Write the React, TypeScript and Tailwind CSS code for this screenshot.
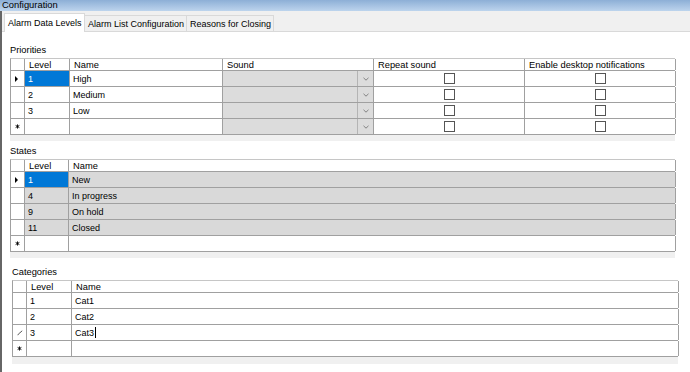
import React from "react";

const Arrow = () => (
  <span className="block w-0 h-0 border-y-[3px] border-y-transparent border-l-[3px] border-l-black" />
);

const Star = () => (
  <svg width="5" height="5" viewBox="0 0 5 5">
    <path d="M2.5 0.4v4.2M0.6 1.4l3.8 2.2M0.6 3.6l3.8-2.2" stroke="#000" strokeWidth="0.9" />
  </svg>
);

const Pencil = () => (
  <svg width="6" height="6" viewBox="0 0 6 6">
    <path d="M0.8 5.2 L1.3 4.2 L5.2 0.8" stroke="#444" strokeWidth="0.9" fill="none" />
  </svg>
);

function RowHead({ kind }: { kind?: "arrow" | "star" | "pencil" }) {
  return (
    <div className="w-[14px] shrink-0 h-full border-r border-[#a0a0a0] bg-white flex items-center pl-[4px]">
      {kind === "arrow" && <Arrow />}
      {kind === "star" && <Star />}
      {kind === "pencil" && <Pencil />}
    </div>
  );
}

function Check() {
  return <span className="block w-[11px] h-[11px] border border-[#555555] bg-white" />;
}

function Combo() {
  return (
    <div className="flex h-full w-full bg-[#dcdcdc]">
      <div className="flex-1" />
      <div className="w-[16px] border-l border-[#b4b4b4] flex items-center justify-center">
        <svg width="6" height="4" viewBox="0 0 6 4">
          <path d="M0.5 0.8 L3 3.2 L5.5 0.8" stroke="#777" strokeWidth="0.9" fill="none" />
        </svg>
      </div>
    </div>
  );
}

function HeadCell({ w, children }: { w: string; children?: React.ReactNode }) {
  return (
    <div
      className={`${w} shrink-0 h-full overflow-hidden pl-[4px] pt-[1px] text-[9.3px] leading-[11px] whitespace-nowrap border-r border-[#a0a0a0]`}
    >
      {children}
    </div>
  );
}

export default function App() {
  const prio = [
    { l: "1", n: "High", k: "arrow" as const, sel: true },
    { l: "2", n: "Medium" },
    { l: "3", n: "Low" },
    { l: "", n: "", k: "star" as const },
  ];
  const states = [
    { l: "1", n: "New", k: "arrow" as const, sel: true },
    { l: "4", n: "In progress" },
    { l: "9", n: "On hold" },
    { l: "11", n: "Closed" },
  ];
  const cats = [
    { l: "1", n: "Cat1" },
    { l: "2", n: "Cat2" },
    { l: "3", n: "Cat3", k: "pencil" as const, cursor: true },
    { l: "", n: "", k: "star" as const },
  ];

  return (
    <div className="w-[690px] h-[372px] overflow-hidden bg-white text-black font-['Liberation_Sans',Arial,sans-serif]">
      {/* title bar */}
      <div className="h-[11px] bg-gradient-to-b from-[#8dafd6] to-[#bdd4ed] pl-[2px] text-[9.4px] leading-[9px] overflow-hidden">
        Configuration
      </div>
      <div className="flex h-[361px]">
        <div className="w-[2px] bg-[#666666] shrink-0" />
        <div className="flex-1 flex flex-col">
          {/* tab strip */}
          <div className="h-[21px] bg-[#f0f0f0] border-b border-[#d9d9d9] flex items-end pl-[2px] text-[9px]">
            <div className="w-[81px] h-[19px] -mb-[1px] bg-white border border-b-0 border-[#d9d9d9] pl-[3px] pt-[3px] leading-[12px] whitespace-nowrap relative z-10">
              Alarm Data Levels
            </div>
            <div className="w-[102px] h-[16px] bg-[#f0f0f0] border border-b-0 border-l-0 border-[#d9d9d9] pl-[3px] pt-[2px] leading-[12px] whitespace-nowrap">
              Alarm List Configuration
            </div>
            <div className="w-[87px] h-[16px] bg-[#f0f0f0] border border-b-0 border-l-0 border-[#d9d9d9] pl-[3px] pt-[2px] leading-[12px] whitespace-nowrap">
              Reasons for Closing
            </div>
          </div>

          {/* content */}
          <div className="flex-1 bg-white pl-[8px] text-[9px]">
            {/* Priorities */}
            <div className="mt-[12px] h-[13px] leading-[13px] text-[9.3px]">Priorities</div>
            <div className="mt-[1px] w-[665px] border-t border-l border-t-[#c6c6c6] border-l-[#a0a0a0]">
              <div className="flex h-[12px] border-b border-[#a0a0a0]">
                <HeadCell w="w-[14px]" />
                <HeadCell w="w-[45px]">Level</HeadCell>
                <HeadCell w="w-[153px]">Name</HeadCell>
                <HeadCell w="w-[151px]">Sound</HeadCell>
                <HeadCell w="w-[151px]">Repeat sound</HeadCell>
                <HeadCell w="w-[151px]">Enable desktop notifications</HeadCell>
              </div>
              {prio.map((r, i) => (
                <div key={i} className="flex h-[16px] border-b border-[#a0a0a0] leading-[16px]">
                  <RowHead kind={r.k} />
                  <div
                    className={`w-[45px] shrink-0 border-r border-[#a0a0a0] pl-[3px] ${
                      r.sel ? "bg-[#0078d7] text-white" : ""
                    }`}
                  >
                    {r.l}
                  </div>
                  <div className="w-[153px] shrink-0 border-r border-[#a0a0a0] pl-[3px]">{r.n}</div>
                  <div className="w-[151px] shrink-0 border-r border-[#a0a0a0]">
                    <Combo />
                  </div>
                  <div className="w-[151px] shrink-0 border-r border-[#a0a0a0] flex items-center justify-center">
                    <Check />
                  </div>
                  <div className="w-[151px] shrink-0 border-r border-[#a0a0a0] flex items-center justify-center">
                    <Check />
                  </div>
                </div>
              ))}
            </div>
            <div className="w-[665px] h-[6px] bg-[#f0f0f0]" />

            {/* States */}
            <div className="mt-[4px] h-[13px] leading-[13px] text-[9.3px]">States</div>
            <div className="mt-[1px] w-[665px] border-t border-l border-t-[#c6c6c6] border-l-[#a0a0a0]">
              <div className="flex h-[12px] border-b border-[#a0a0a0]">
                <HeadCell w="w-[14px]" />
                <HeadCell w="w-[44px]">Level</HeadCell>
                <HeadCell w="w-[607px]">Name</HeadCell>
              </div>
              {states.map((r, i) => (
                <div key={i} className="flex h-[16px] border-b border-[#a0a0a0] leading-[16px]">
                  <RowHead kind={r.k} />
                  <div
                    className={`w-[44px] shrink-0 border-r border-[#a0a0a0] pl-[3px] ${
                      r.sel ? "bg-[#0078d7] text-white" : "bg-[#d9d9d9]"
                    }`}
                  >
                    {r.l}
                  </div>
                  <div className="w-[607px] shrink-0 border-r border-[#a0a0a0] pl-[3px] bg-[#d9d9d9]">{r.n}</div>
                </div>
              ))}
              <div className="flex h-[16px] border-b border-[#a0a0a0]">
                <RowHead kind="star" />
                <div className="w-[44px] shrink-0 border-r border-[#a0a0a0]" />
                <div className="w-[607px] shrink-0 border-r border-[#a0a0a0]" />
              </div>
            </div>
            <div className="w-[665px] h-[6px] bg-[#f0f0f0]" />

            {/* Categories */}
            <div className="ml-[2px]">
              <div className="mt-[8px] h-[13px] leading-[13px] text-[9.3px]">Categories</div>
              <div className="mt-[1px] w-[666px] border-t border-l border-t-[#c6c6c6] border-l-[#a0a0a0]">
                <div className="flex h-[12px] border-b border-[#a0a0a0]">
                  <HeadCell w="w-[14px]" />
                  <HeadCell w="w-[45px]">Level</HeadCell>
                  <HeadCell w="w-[607px]">Name</HeadCell>
                </div>
                {cats.map((r, i) => (
                  <div key={i} className="flex h-[16px] border-b border-[#a0a0a0] leading-[16px]">
                    <RowHead kind={r.k} />
                    <div className="w-[45px] shrink-0 border-r border-[#a0a0a0] pl-[3px]">{r.l}</div>
                    <div className="w-[607px] shrink-0 border-r border-[#a0a0a0] pl-[3px] flex items-center">
                      <span>{r.n}</span>
                      {r.cursor && <span className="ml-[1px] w-px h-[11px] bg-black" />}
                    </div>
                  </div>
                ))}
              </div>
              <div className="w-[666px] h-[7px] bg-[#f0f0f0]" />
            </div>
          </div>
        </div>
      </div>
    </div>
  );
}
